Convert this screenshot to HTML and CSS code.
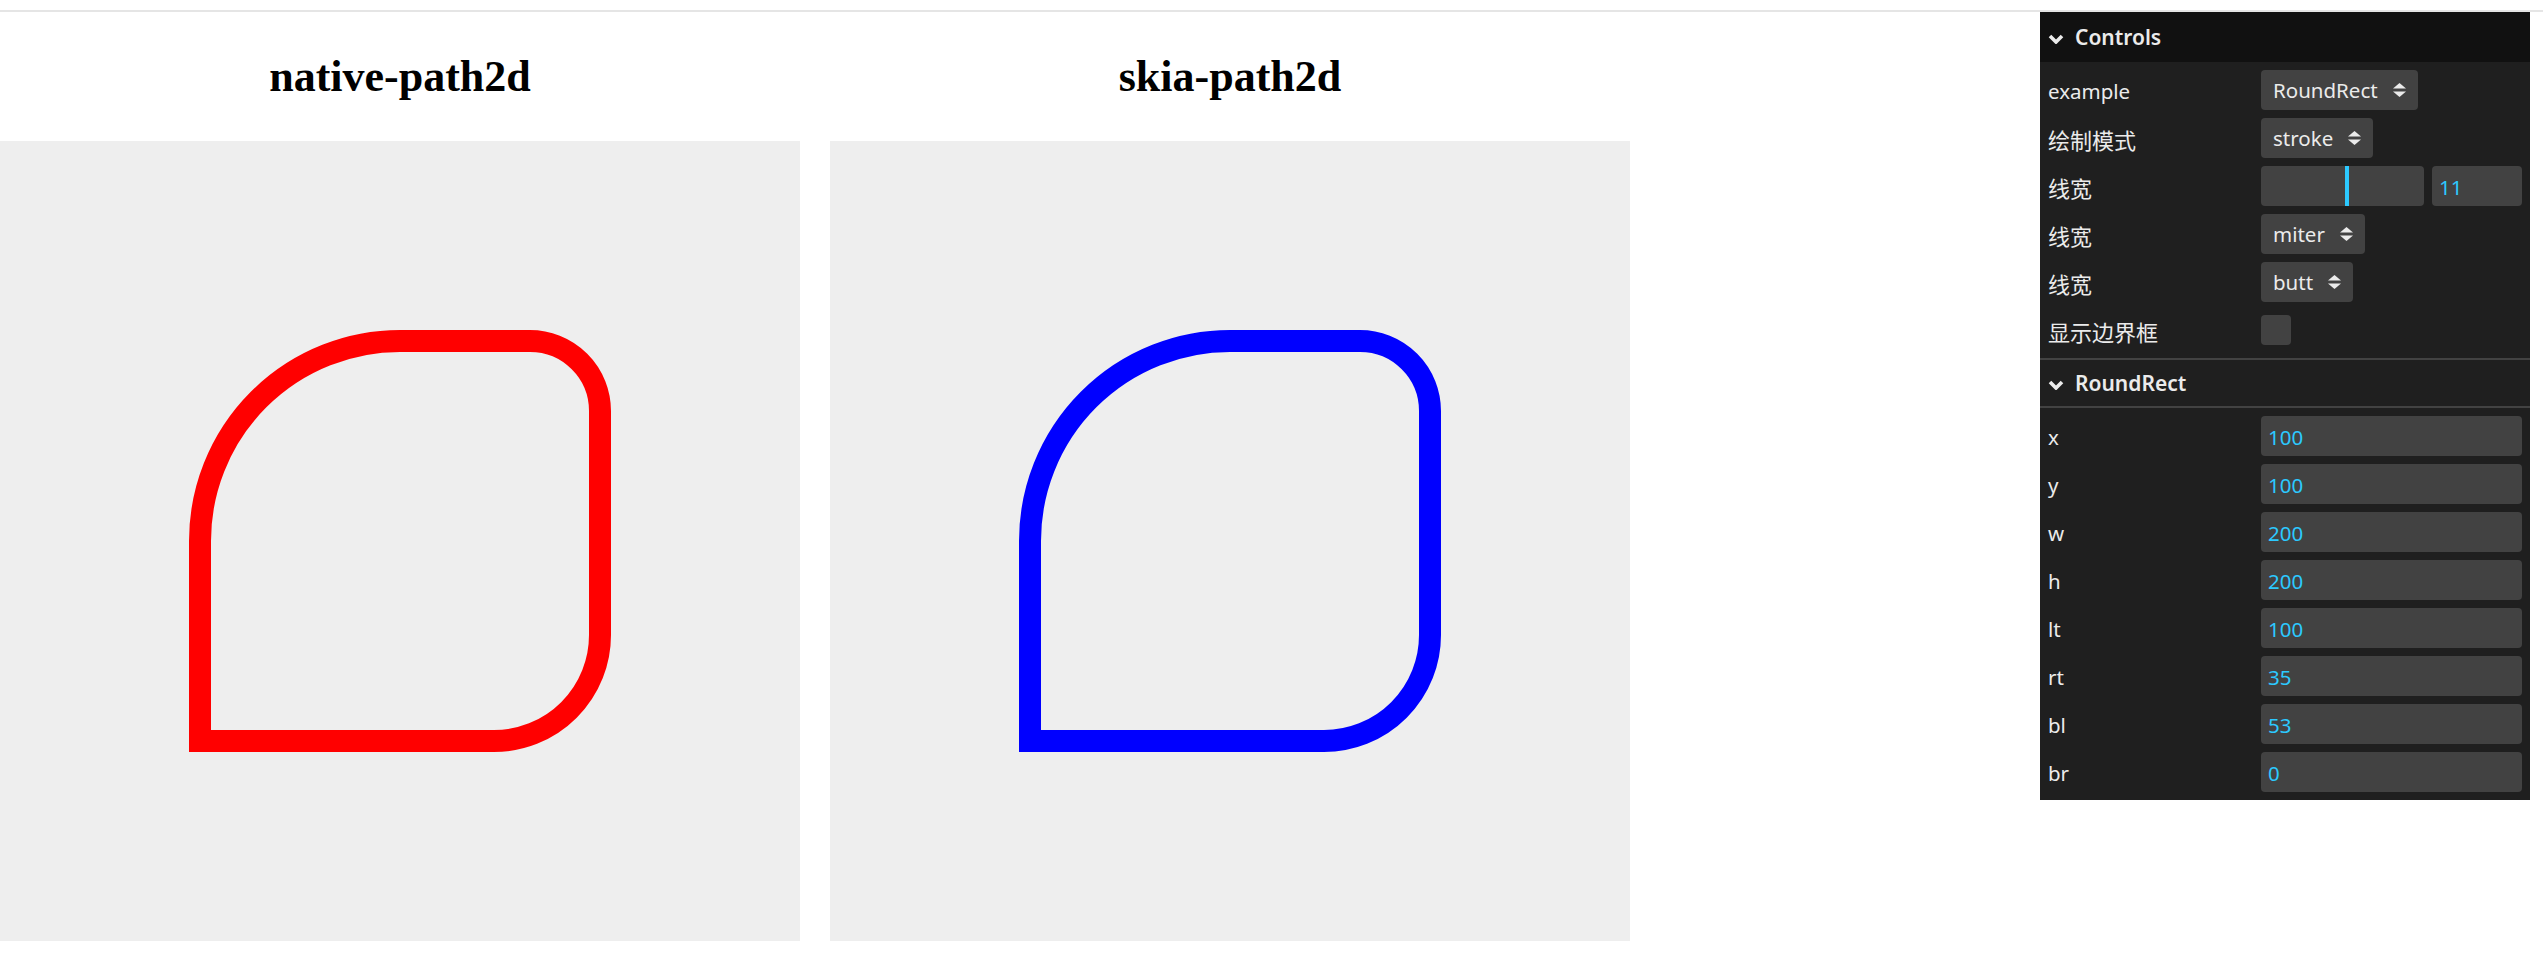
FILE: index.html
```html
<!DOCTYPE html>
<html lang="zh">
<head>
<meta charset="utf-8">
<title>path2d compare</title>
<link rel="stylesheet" href="styles.css">
</head>
<body>
<div class="topline"></div>
<main class="stage">
  <section class="col">
    <h2 class="col-title">native-path2d</h2>
    <svg class="canvas" width="800" height="800" viewBox="0 0 800 800">
      <path class="shape shape-red" d="M200 600 L200 400 A200 200 0 0 1 400 200 L530 200 A70 70 0 0 1 600 270 L600 494 A106 106 0 0 1 494 600 Z"/>
    </svg>
  </section>
  <section class="col">
    <h2 class="col-title">skia-path2d</h2>
    <svg class="canvas" width="800" height="800" viewBox="0 0 800 800">
      <path class="shape shape-blue" d="M200 600 L200 400 A200 200 0 0 1 400 200 L530 200 A70 70 0 0 1 600 270 L600 494 A106 106 0 0 1 494 600 Z"/>
    </svg>
  </section>
</main>

<aside class="gui">
  <div class="gui-title root-title">
    <svg class="chev" width="16" height="10" viewBox="0 0 16 10"><polyline points="2,2 8,8 14,2"/></svg>
    <span>Controls</span>
  </div>
  <div class="children">
    <div class="row">
      <span class="name">example</span>
      <div class="widget"><div class="select"><span>RoundRect</span><svg class="updown" width="13" height="14" viewBox="0 0 13 14"><polygon points="0,5.5 6.5,0 13,5.5"/><polygon points="0,8.5 6.5,14 13,8.5"/></svg></div></div>
    </div>
    <div class="row">
      <span class="name cjk">绘制模式</span>
      <div class="widget"><div class="select"><span>stroke</span><svg class="updown" width="13" height="14" viewBox="0 0 13 14"><polygon points="0,5.5 6.5,0 13,5.5"/><polygon points="0,8.5 6.5,14 13,8.5"/></svg></div></div>
    </div>
    <div class="row">
      <span class="name cjk">线宽</span>
      <div class="widget">
        <div class="slider"><div class="fill"></div></div>
        <div class="num num-sm">11</div>
      </div>
    </div>
    <div class="row">
      <span class="name cjk">线宽</span>
      <div class="widget"><div class="select"><span>miter</span><svg class="updown" width="13" height="14" viewBox="0 0 13 14"><polygon points="0,5.5 6.5,0 13,5.5"/><polygon points="0,8.5 6.5,14 13,8.5"/></svg></div></div>
    </div>
    <div class="row">
      <span class="name cjk">线宽</span>
      <div class="widget"><div class="select"><span>butt</span><svg class="updown" width="13" height="14" viewBox="0 0 13 14"><polygon points="0,5.5 6.5,0 13,5.5"/><polygon points="0,8.5 6.5,14 13,8.5"/></svg></div></div>
    </div>
    <div class="row">
      <span class="name cjk">显示边界框</span>
      <div class="widget widget-center"><div class="checkbox"></div></div>
    </div>
  </div>

  <div class="gui-title folder-title">
    <svg class="chev" width="16" height="10" viewBox="0 0 16 10"><polyline points="2,2 8,8 14,2"/></svg>
    <span>RoundRect</span>
  </div>
  <div class="children">
    <div class="row"><span class="name">x</span><div class="widget"><div class="num">100</div></div></div>
    <div class="row"><span class="name">y</span><div class="widget"><div class="num">100</div></div></div>
    <div class="row"><span class="name">w</span><div class="widget"><div class="num">200</div></div></div>
    <div class="row"><span class="name">h</span><div class="widget"><div class="num">200</div></div></div>
    <div class="row"><span class="name">lt</span><div class="widget"><div class="num">100</div></div></div>
    <div class="row"><span class="name">rt</span><div class="widget"><div class="num">35</div></div></div>
    <div class="row"><span class="name">bl</span><div class="widget"><div class="num">53</div></div></div>
    <div class="row"><span class="name">br</span><div class="widget"><div class="num">0</div></div></div>
  </div>
</aside>
</body>
</html>
```

FILE: styles.css
```css
* { box-sizing: border-box; }

html, body {
  margin: 0;
  padding: 0;
  background: #ffffff;
}

body {
  font-family: "Liberation Serif", serif;
  overflow: hidden;
}

.topline {
  margin-top: 10px;
  border-top: 2px solid #e5e5e5;
}

.stage {
  display: flex;
  gap: 30px;
}

.col {
  width: 800px;
  display: flex;
  flex-direction: column;
}

.col-title {
  margin: 0;
  padding: 40px 0 39px;
  line-height: 50px;
  font-size: 44px;
  font-weight: bold;
  text-align: center;
  color: #000;
}

.canvas {
  display: block;
  background: #eeeeee;
}

.shape {
  fill: none;
  stroke-width: 22;
  stroke-linejoin: miter;
  stroke-linecap: butt;
}
.shape-red { stroke: #ff0000; }
.shape-blue { stroke: #0000ff; }

/* control panel */
.gui {
  position: fixed;
  top: 12px;
  right: 13px;
  width: 490px;
  background: #1f1f1f;
  color: #ebebeb;
  font-family: "Noto Sans", "Noto Sans CJK SC", sans-serif;
  font-size: 20.5px;
}

.gui-title {
  height: 50px;
  display: flex;
  align-items: center;
  gap: 11px;
  padding: 0 8px 0 8px;
  font-weight: 600;
  font-size: 21px;
}

.root-title { background: #111111; }

.folder-title {
  border-top: 2px solid #424242;
  border-bottom: 2px solid #424242;
}

.chev {
  flex: none;
  margin-top: 3px;
}
.chev polyline {
  fill: none;
  stroke: #ebebeb;
  stroke-width: 3.6;
}

.children {
  display: flex;
  flex-direction: column;
  gap: 8px;
  padding: 8px 0;
}

.row {
  height: 40px;
  display: flex;
  align-items: center;
  padding: 0 8px;
}

.name {
  width: 213px;
  flex: none;
  white-space: nowrap;
  padding-top: 1px;
}
.name.cjk { font-size: 22px; }

.widget {
  flex: 1;
  display: flex;
  gap: 8px;
  height: 40px;
}
.widget-center { align-items: center; }

.select {
  display: flex;
  align-items: center;
  gap: 15px;
  height: 40px;
  padding: 0 12px;
  background: #424242;
  border-radius: 4px;
}
.updown polygon { fill: #ebebeb; }

.num {
  flex: 1;
  display: flex;
  align-items: center;
  height: 40px;
  padding: 1px 7px 0;
  background: #424242;
  border-radius: 4px;
  color: #2cc9ff;
}
.num-sm {
  flex: none;
  width: 90px;
}

.slider {
  width: 163px;
  height: 40px;
  background: #424242;
  border-radius: 4px;
  overflow: hidden;
}
.fill {
  width: 88px;
  height: 100%;
  border-right: 4px solid #2cc9ff;
}

.checkbox {
  width: 30px;
  height: 30px;
  background: #424242;
  border-radius: 4px;
}
```
